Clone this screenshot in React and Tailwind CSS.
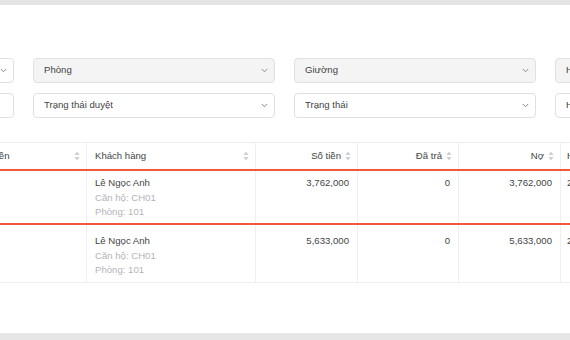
import React from "react";

const FONT = { fontFamily: '"Liberation Sans", Arial, sans-serif' };

function Chevron() {
  return (
    <svg width="7" height="5" viewBox="0 0 7 5" className="shrink-0">
      <polyline points="0.8,1 3.5,3.8 6.2,1" fill="none" stroke="#8c8c8c" strokeWidth="1" />
    </svg>
  );
}

function SortIcon() {
  return (
    <svg width="6" height="10" viewBox="0 0 6 10" className="shrink-0">
      <path d="M3 0.5 L5.6 4 L0.4 4 Z" fill="#d0d0d4" />
      <path d="M3 9.5 L5.6 6 L0.4 6 Z" fill="#d0d0d4" />
    </svg>
  );
}

function Select({ label, muted }) {
  return (
    <div
      className={`h-[25px] rounded-[4px] border border-[#e0e0e0] flex items-center justify-between pl-[10px] pr-[6px] text-[9.6px] text-[#444] ${
        muted ? "bg-[#f4f4f5]" : "bg-white"
      }`}
    >
      <span className="truncate">{label}</span>
      <Chevron />
    </div>
  );
}

const COLS = [
  { key: "name", label: "Tên khoản tiền", w: "w-[149px]", align: "left" },
  { key: "customer", label: "Khách hàng", w: "w-[169px]", align: "left" },
  { key: "amount", label: "Số tiền", w: "w-[102px]", align: "right" },
  { key: "paid", label: "Đã trả", w: "w-[101px]", align: "right" },
  { key: "debt", label: "Nợ", w: "w-[102px]", align: "right" },
  { key: "due", label: "Hạn thanh toán", w: "w-[140px]", align: "left" },
];

const ROWS = [
  { amount: "3,762,000", paid: "0", debt: "3,762,000", due: "2024-06-05", active: true },
  { amount: "5,633,000", paid: "0", debt: "5,633,000", due: "2024-07-05" },
];

export default function App() {
  return (
    <div style={FONT} className="w-[570px] h-[340px] overflow-hidden bg-white flex flex-col">
      <div className="h-[5px] bg-[#e4e4e4] shrink-0" />
      <div className="flex-1 overflow-hidden">
        <div className="ml-[-228px] w-[1100px]">
          {/* filters */}
          <div className="mt-[53px] grid grid-cols-[242px_242px_242px_242px] gap-x-[19px] gap-y-[10px]">
            <Select label="Tòa nhà" />
            <Select label="Phòng" muted />
            <Select label="Giường" muted />
            <Select label="Hạn thanh toán" muted />
            <div className="h-[25px] rounded-[4px] border border-[#e0e0e0] bg-white" />
            <Select label="Trạng thái duyệt" />
            <Select label="Trạng thái" />
            <Select label="Hình thức" />
          </div>

          {/* table */}
          <div className="ml-[166px] mt-[24px] text-[9.6px] text-[#444]">
            <div className="flex h-[29px] border-t border-[#efeff2] border-b-2 border-b-[#f4573b]">
              {COLS.map((c, i) => (
                <div
                  key={c.key}
                  className={`${c.w} shrink-0 flex items-center gap-[4px] ${
                    i < COLS.length - 1 ? "border-r border-[#efeff2]" : ""
                  } ${
                    c.align === "right"
                      ? "justify-end pr-[6px]"
                      : i === COLS.length - 1
                      ? "pl-[6px]"
                      : "justify-between pl-[8px] pr-[6px]"
                  }`}
                >
                  <span>{c.label}</span>
                  {i < COLS.length - 1 && <SortIcon />}
                </div>
              ))}
            </div>
            {ROWS.map((r, ri) => (
              <div
                key={ri}
                className={`flex leading-[14.5px] ${
                  r.active
                    ? "h-[54px] border-b-2 border-[#f4573b]"
                    : "h-[58px] border-b border-[#efeff2]"
                }`}
              >
                {COLS.map((c, i) => (
                  <div
                    key={c.key}
                    className={`${c.w} shrink-0 ${r.active ? "pt-[5px]" : "pt-[9px]"} ${
                      i < COLS.length - 1 ? "border-r border-[#efeff2]" : ""
                    } ${c.align === "right" ? "text-right pr-[8px]" : i === COLS.length - 1 ? "pl-[6px]" : "pl-[8px]"}`}
                  >
                    {c.key === "customer" ? (
                      <>
                        <div>Lê Ngọc Anh</div>
                        <div className="text-[#b4b4b8]">Căn hộ: CH01</div>
                        <div className="text-[#b4b4b8]">Phòng: 101</div>
                      </>
                    ) : c.key === "name" ? null : (
                      <div>{r[c.key]}</div>
                    )}
                  </div>
                ))}
              </div>
            ))}
          </div>
        </div>
      </div>
      <div className="h-[7px] bg-[#e6e6e6] shrink-0" />
    </div>
  );
}
